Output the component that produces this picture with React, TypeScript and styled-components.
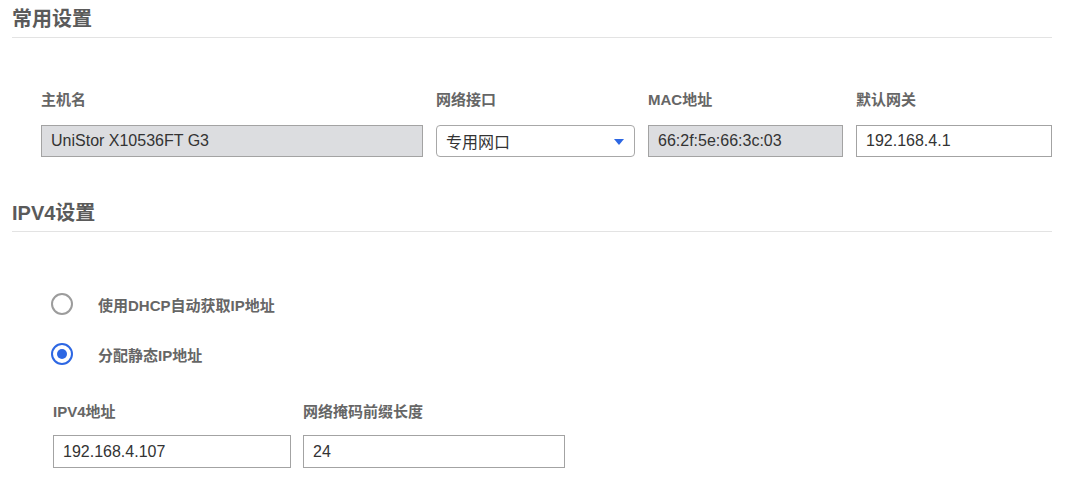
import React from "react";
import styled, { createGlobalStyle } from "styled-components";

const GlobalStyle = createGlobalStyle`
  html, body {
    margin: 0;
    padding: 0;
    background: #ffffff;
    font-family: "Liberation Sans", Arial, "Noto Sans CJK SC", sans-serif;
  }
  * { box-sizing: border-box; }
`;

const Page = styled.div`
  width: 1086px;
  padding: 0 34px 0 12px;
`;

const SectionHeader = styled.div`
  height: 38px;
  padding-top: 5px;
  border-bottom: 1px solid #e3e3e3;
`;

const SectionTitle = styled.h2`
  margin: 0;
  font-size: 20px;
  line-height: 28px;
  font-weight: bold;
  color: #5a5a5a;
`;

const GeneralBody = styled.div`
  padding: 52px 0 37px 29px;
`;

const FieldGrid = styled.div<{ $cols: string; $gap: number }>`
  display: grid;
  grid-template-columns: ${(p) => p.$cols};
  column-gap: ${(p) => p.$gap}px;
`;

const Field = styled.div`
  display: flex;
  flex-direction: column;
`;

const Label = styled.div<{ $gap: number }>`
  font-size: 15px;
  line-height: 20px;
  font-weight: bold;
  color: #666666;
  margin-bottom: ${(p) => p.$gap}px;
`;

const TextInput = styled.input<{ $h: number }>`
  width: 100%;
  height: ${(p) => p.$h}px;
  margin: 0;
  padding: 0 9px;
  border: 1px solid ${(p) => (p.readOnly ? "#a3a3a3" : "#a3a3a3")};
  border-radius: 0;
  background: ${(p) => (p.disabled ? "#dcdde0" : "#ffffff")};
  font-family: "Liberation Sans", Arial, "Noto Sans CJK SC", sans-serif;
  font-size: 16px;
  color: #333333;
  outline: none;
  &:disabled {
    color: #333333;
    -webkit-text-fill-color: #333333;
    opacity: 1;
  }
`;

const SelectBox = styled.div`
  height: 32px;
  display: flex;
  align-items: center;
  justify-content: space-between;
  padding: 0 10px 0 9px;
  border: 1px solid #a8a8a8;
  border-radius: 4px;
  background: #ffffff;
  font-size: 16px;
  color: #333333;
`;

const Caret = styled.span`
  width: 0;
  height: 0;
  border-left: 5px solid transparent;
  border-right: 5px solid transparent;
  border-top: 6px solid #2d67e3;
  margin-top: 1px;
`;

const IpBody = styled.div`
  padding: 57px 0 0 0;
`;

const RadioList = styled.div`
  display: flex;
  flex-direction: column;
  gap: 20px;
  padding-left: 39px;
`;

const RadioRow = styled.label`
  height: 30px;
  display: flex;
  align-items: center;
  gap: 25px;
  cursor: pointer;
`;

const RadioCircle = styled.span<{ $checked: boolean }>`
  width: 22px;
  height: 22px;
  border-radius: 50%;
  border: 2px solid ${(p) => (p.$checked ? "#2d67e3" : "#9c9c9c")};
  background: #ffffff;
  display: flex;
  align-items: center;
  justify-content: center;
  flex-shrink: 0;
  &::after {
    content: "";
    display: ${(p) => (p.$checked ? "block" : "none")};
    width: 10px;
    height: 10px;
    border-radius: 50%;
    background: #2d67e3;
  }
`;

const RadioText = styled.span`
  font-size: 15px;
  font-weight: bold;
  color: #666666;
`;

const StaticFields = styled.div`
  padding: 33px 0 0 41px;
`;

export default function App() {
  return (
    <>
      <GlobalStyle />
      <Page>
        <SectionHeader>
          <SectionTitle>常用设置</SectionTitle>
        </SectionHeader>
        <GeneralBody>
          <FieldGrid $cols="382px 199px 195px 196px" $gap={13}>
            <Field>
              <Label $gap={15}>主机名</Label>
              <TextInput $h={32} disabled defaultValue="UniStor X10536FT G3" />
            </Field>
            <Field>
              <Label $gap={15}>网络接口</Label>
              <SelectBox>
                <span>专用网口</span>
                <Caret />
              </SelectBox>
            </Field>
            <Field>
              <Label $gap={15}>MAC地址</Label>
              <TextInput $h={32} disabled defaultValue="66:2f:5e:66:3c:03" />
            </Field>
            <Field>
              <Label $gap={15}>默认网关</Label>
              <TextInput $h={32} defaultValue="192.168.4.1" />
            </Field>
          </FieldGrid>
        </GeneralBody>

        <SectionHeader>
          <SectionTitle>IPV4设置</SectionTitle>
        </SectionHeader>
        <IpBody>
          <RadioList>
            <RadioRow>
              <RadioCircle $checked={false} />
              <RadioText>使用DHCP自动获取IP地址</RadioText>
            </RadioRow>
            <RadioRow>
              <RadioCircle $checked={true} />
              <RadioText>分配静态IP地址</RadioText>
            </RadioRow>
          </RadioList>
          <StaticFields>
            <FieldGrid $cols="238px 262px" $gap={12}>
              <Field>
                <Label $gap={13}>IPV4地址</Label>
                <TextInput $h={33} defaultValue="192.168.4.107" />
              </Field>
              <Field>
                <Label $gap={13}>网络掩码前缀长度</Label>
                <TextInput $h={33} defaultValue="24" />
              </Field>
            </FieldGrid>
          </StaticFields>
        </IpBody>
      </Page>
    </>
  );
}
